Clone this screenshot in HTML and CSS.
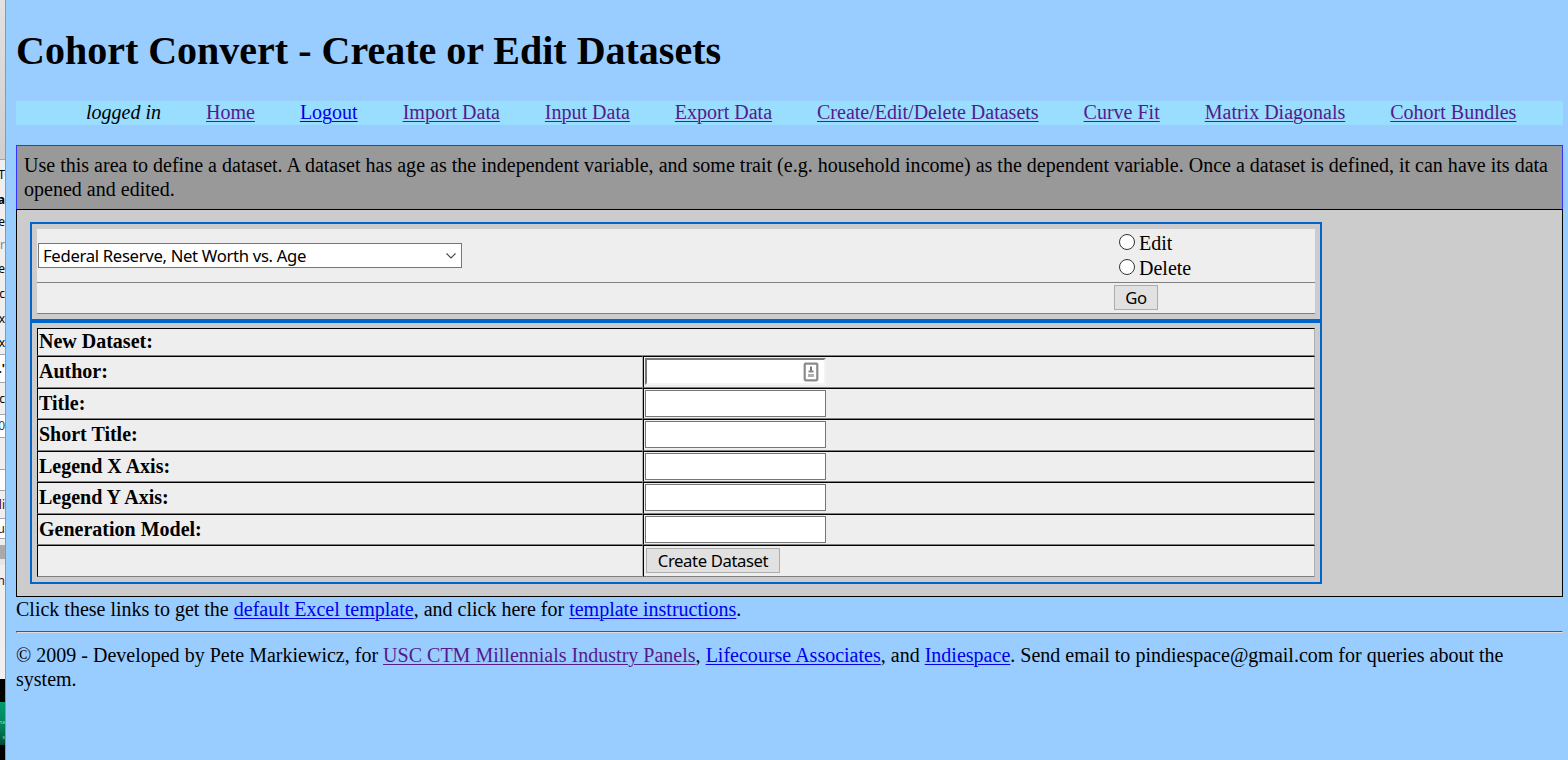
FILE: index.html
```html
<!DOCTYPE html>
<html lang="en">
<head>
<meta charset="utf-8">
<title>Cohort Convert - Create or Edit Datasets</title>
<link rel="stylesheet" href="styles.css">
</head>
<body>
<aside class="edge">
  <div class="e h160 shade line"></div>
  <div class="e h29">T</div>
  <div class="e h21 bold">a</div>
  <div class="e h24 pale">e</div>
  <div class="e h22 gray">.r</div>
  <div class="e h25">e</div>
  <div class="e h25">c</div>
  <div class="e h25">x</div>
  <div class="e h24 line">ix</div>
  <div class="e h28 line white bold">.'</div>
  <div class="e h32 line">ic</div>
  <div class="e h23 line white blue">0</div>
  <div class="e h32 line"></div>
  <div class="e h21 line white"></div>
  <div class="e h28 line plum">li</div>
  <div class="e h20 line white plum">gu</div>
  <div class="e h26 dark"></div>
  <div class="e h32 plum low">h</div>
  <div class="e h55"></div>
  <div class="e h27 pale"></div>
  <div class="e h23 black"></div>
  <div class="e h43 green"><span>na</span><span>s</span></div>
  <div class="e h15 black"></div>
</aside>
<main class="page">
  <h1 class="title">Cohort Convert - Create or Edit Datasets</h1>
  <nav class="nav">
    <em>logged in</em>
    <a class="visited" href="#">Home</a>
    <a href="#">Logout</a>
    <a class="visited" href="#">Import Data</a>
    <a class="visited" href="#">Input Data</a>
    <a class="visited" href="#">Export Data</a>
    <a class="visited" href="#">Create/Edit/Delete Datasets</a>
    <a class="visited" href="#">Curve Fit</a>
    <a class="visited" href="#">Matrix Diagonals</a>
    <a class="visited" href="#">Cohort Bundles</a>
  </nav>
  <p class="intro">Use this area to define a dataset. A dataset has age as the independent variable, and some trait (e.g. household income) as the dependent variable. Once a dataset is defined, it can have its data opened and edited.</p>
  <section class="panel">
    <form class="box">
      <div class="pick">
        <div class="select"><span>Federal Reserve, Net Worth vs. Age</span><svg width="12" height="8" viewBox="0 0 12 8"><path d="M1.500 1.500 6 6l4.500-4.500" fill="none" stroke="#444" stroke-width="1.100"/></svg></div>
        <div class="radios">
          <label><i class="radio"></i>Edit</label>
          <label><i class="radio"></i>Delete</label>
        </div>
      </div>
      <div class="go-row"><button type="button" class="btn go">Go</button></div>
    </form>
    <form class="box">
      <div class="grid">
        <div class="cell wide">New Dataset:</div>
        <div class="cell">Author:</div><div class="cell"><div class="author"><svg width="16" height="20" viewBox="0 0 16 20"><rect x="1.700" y="1.700" width="12.600" height="16.600" rx="1" fill="#fff" stroke="#8a8a8a" stroke-width="2.200"/><path d="M8 4.500v5" stroke="#777" stroke-width="2"/><path d="M5.500 8.500h5v2h-5z" fill="#888"/><path d="M5 12h6v3H5z" fill="#b0b0b0"/></svg></div></div>
        <div class="cell">Title:</div><div class="cell"><input class="field"></div>
        <div class="cell">Short Title:</div><div class="cell"><input class="field"></div>
        <div class="cell">Legend X Axis:</div><div class="cell"><input class="field"></div>
        <div class="cell">Legend Y Axis:</div><div class="cell"><input class="field"></div>
        <div class="cell">Generation Model:</div><div class="cell"><input class="field"></div>
        <div class="cell"></div><div class="cell"><button type="button" class="btn create">Create Dataset</button></div>
      </div>
    </form>
  </section>
  <p class="links">Click these links to get the <a href="#">default Excel template</a>, and click here for <a href="#">template instructions</a>.</p>
  <hr class="rule">
  <p class="footer">© 2009 - Developed by Pete Markiewicz, for <a class="visited" href="#">USC CTM Millennials Industry Panels</a>, <a href="#">Lifecourse Associates</a>, and <a href="#">Indiespace</a>. Send email to pindiespace@gmail.com for queries about the system.</p>
</main>
</body>
</html>
```
FILE: styles.css
```css
* { box-sizing: border-box; }
body { margin: 0; display: flex; height: 760px; overflow: hidden; background: #99ccff; color: #000; font: 20px/24px "Liberation Serif", "Times New Roman", serif; }
a { color: #0000ee; text-decoration: underline; text-decoration-thickness: 1px; text-underline-offset: 2px; }
a.visited { color: #551a8b; }

.edge { width: 6px; flex: none; overflow: hidden; border-right: 1px solid #8f969e; background: #eee; font: 12px/16px "Noto Sans", sans-serif; }
.e { display: flex; justify-content: flex-end; align-items: center; width: 5px; overflow: hidden; white-space: nowrap; background: #efefef; }
.shade { background: linear-gradient(#e2e2e2, #cfcfcf); }
.line { border-bottom: 1px solid #a5a5ae; }
.bold { font-weight: bold; }
.pale { background: #f0f0f0; }
.white { background: #fff; }
.gray { color: #888; }
.blue { color: #246; }
.plum { color: #402; }
.dark { background: linear-gradient(#eee 6px, #aaa 6px, #aaa 20px, #e5e5e5 20px); }
.black { background: #000; }
.green { background: linear-gradient(#009b72, #008057 60%, #004c34); color: #9dc; font-size: 5px; line-height: 15px; flex-direction: column; align-items: flex-end; }
.h160 { height: 160px; } .h29 { height: 29px; } .h21 { height: 21px; } .h24 { height: 24px; }
.h22 { height: 22px; } .h25 { height: 25px; } .h28 { height: 28px; } .h32 { height: 32px; }
.h23 { height: 23px; } .h20 { height: 20px; } .h26 { height: 26px; } .h55 { height: 55px; }
.h27 { height: 27px; } .h43 { height: 43px; } .h15 { height: 15px; }

.page { width: 1557px; padding: 0 0 0 10px; flex: none; }
.title { margin: 27px 0 26px; font-size: 40px; line-height: 48px; font-weight: bold; }
.nav { display: flex; gap: 45px; height: 24px; padding-left: 70px; background: #99ddff; white-space: nowrap; line-height: 22px; }
.intro { margin: 20px 0 0; height: 64px; padding: 7px 7px 0; border: 1px solid #3333ff; border-bottom: 0; background: #999; letter-spacing: 0.012px; }
.panel { height: 388px; padding: 12px 13px; border: 1px solid #000; background: #ccc; }
.box { width: 1292px; padding: 5px; border: 2px solid #0066cc; }
.pick { display: flex; align-items: center; height: 54px; background: #eee; border-bottom: 1px solid #808080; padding-left: 1px; }
.select { display: flex; align-items: center; justify-content: space-between; width: 424px; height: 25px; padding: 0 4px 0 4px; border: 1px solid #767676; background: #fff; font: 16.700px/23px "Noto Sans", sans-serif; letter-spacing: -0.320px; }
.radios { display: flex; flex-direction: column; margin-left: 657px; }
.radios label { display: flex; align-items: center; height: 25px; gap: 4px; }
.radio { width: 16px; height: 16px; border: 1px solid #333; border-radius: 50%; background: #fff; margin-top: -2px; }
.go-row { height: 31px; padding: 2px 0 0 1077px; background: #eee; border-bottom: 1px solid #808080; display: flex; align-items: flex-start; }
.btn { height: 25px; border: 1px solid #adadad; background: #e1e1e1; padding: 0; color: #000; font: 16.700px/23px "Noto Sans", sans-serif; letter-spacing: -0.400px; }
.go { width: 44px; }
.create { width: 134px; margin: 1px 0 0 1px; }
.grid { display: grid; grid-template-columns: 606px 672px; grid-template-rows: 28px 32px 31px 32px 31px 32px 31px 32px; }
.cell { padding: 1px; border: 1px solid; border-color: #000 #b0b0b0 #808080 #000; background: #eee; font-weight: bold; display: flex; align-items: flex-start; line-height: 26px; }
.cell.wide { grid-column: 1 / 3; line-height: 25px; padding-top: 0; }
.field, .author { width: 181px; height: 27px; margin: 0; border: 1px solid #767676; background: #fff; }
.author { border: 2px solid; border-color: #767676 #f4f4f4 #f4f4f4 #767676; display: flex; justify-content: flex-end; align-items: center; padding-right: 5px; }
.links { margin: 0; }
.rule { height: 2px; margin: 10px 0; border: 1px solid; border-color: #555 #ddd #ddd #555; }
.footer { margin: 0; letter-spacing: 0.008px; }
```
